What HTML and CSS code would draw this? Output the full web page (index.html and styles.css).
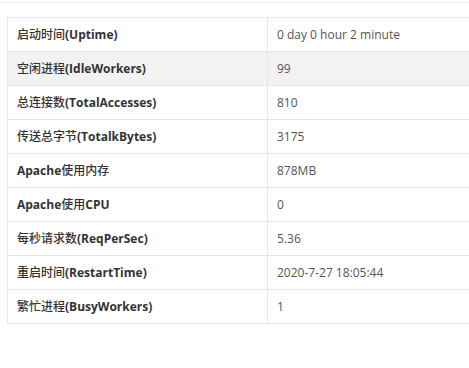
FILE: index.html
```html
<!DOCTYPE html>
<html lang="zh-CN">
<head>
<meta charset="utf-8">
<title>Apache状态</title>
<link rel="stylesheet" href="styles.css">
</head>
<body>
<div class="topbar"></div>
<div class="content">
  <table class="info">
    <colgroup><col class="c1"><col class="c2"></colgroup>
    <tbody>
      <tr><td class="k">启动时间<b>(Uptime)</b></td><td class="v">0 day 0 hour 2 minute</td></tr>
      <tr class="hover"><td class="k">空闲进程<b>(IdleWorkers)</b></td><td class="v">99</td></tr>
      <tr><td class="k">总连接数<b>(TotalAccesses)</b></td><td class="v">810</td></tr>
      <tr><td class="k">传送总字节<b>(TotalkBytes)</b></td><td class="v">3175</td></tr>
      <tr><td class="k"><b>Apache</b>使用内存</td><td class="v">878MB</td></tr>
      <tr><td class="k"><b>Apache</b>使用<b>CPU</b></td><td class="v">0</td></tr>
      <tr><td class="k">每秒请求数<b>(ReqPerSec)</b></td><td class="v">5.36</td></tr>
      <tr><td class="k">重启时间<b>(RestartTime)</b></td><td class="v">2020-7-27 18:05:44</td></tr>
      <tr><td class="k">繁忙进程<b>(BusyWorkers)</b></td><td class="v">1</td></tr>
    </tbody>
  </table>
</div>
</body>
</html>
```
FILE: styles.css
```css
html, body {
  margin: 0;
  padding: 0;
  background: #fff;
  overflow: hidden;
}
body {
  font-family: "Open Sans", "Noto Sans CJK SC", sans-serif;
  font-size: 12px;
  color: #333;
}
.topbar {
  height: 2px;
  border-bottom: 1px solid #eeeeee;
}
.content {
  padding: 14px 0 0 7px;
}
.info {
  border-collapse: collapse;
  width: 463px;
  table-layout: fixed;
}
.info .c1 { width: 260px; }
.info td {
  border: 1px solid #e6e6e6;
  height: 34px;
  padding: 0 9px;
  line-height: 20px;
  box-sizing: border-box;
  white-space: nowrap;
}
.info .k {
  color: #333;
  font-weight: 500;
}
.info .k b {
  font-weight: 700;
}
.info .v {
  color: #555;
}
.info tr.hover td {
  background: #f2f2f2;
}
```
